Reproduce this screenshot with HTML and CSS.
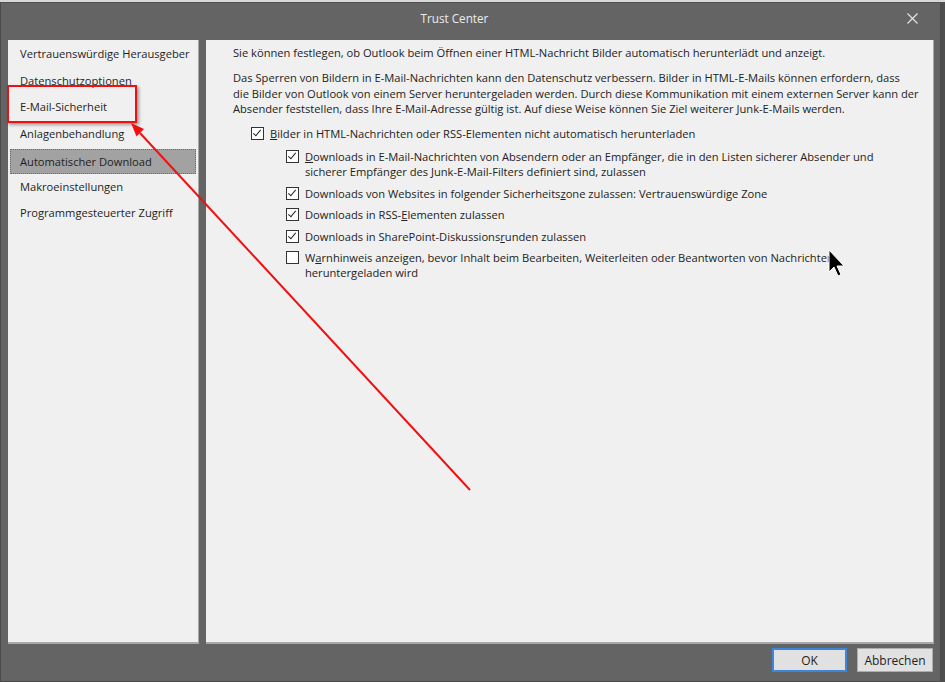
FILE: index.html
```html
<!DOCTYPE html>
<html lang="de">
<head>
    <meta charset="UTF-8">
    <title>Trust Center</title>
    <link rel="stylesheet" href="styles.css">
</head>
<body>
    <div class="top-strip"></div>
    <div class="dialog">
        <div class="title-bar">
            <span class="title">Trust Center</span>
            <svg class="close" width="11" height="11" viewBox="0 0 11 11">
                <path d="M0.5 0.5 L10.5 10.5 M10.5 0.5 L0.5 10.5" stroke="#e4e4e4" stroke-width="1.2" fill="none"/>
            </svg>
        </div>

        <div class="content">
            <ul class="nav">
                <li>Vertrauenswürdige Herausgeber</li>
                <li>Datenschutzoptionen</li>
                <li>E-Mail-Sicherheit</li>
                <li>Anlagenbehandlung</li>
                <li class="selected">Automatischer Download</li>
                <li>Makroeinstellungen</li>
                <li>Programmgesteuerter Zugriff</li>
            </ul>

            <div class="panel">
                <p class="intro">Sie können festlegen, ob Outlook beim Öffnen einer HTML-Nachricht Bilder automatisch herunterlädt und anzeigt.</p>
                <p class="info">Das Sperren von Bildern in E-Mail-Nachrichten kann den Datenschutz verbessern. Bilder in HTML-E-Mails können erfordern, dass<br>die Bilder von Outlook von einem Server heruntergeladen werden. Durch diese Kommunikation mit einem externen Server kann der<br>Absender feststellen, dass Ihre E-Mail-Adresse gültig ist. Auf diese Weise können Sie Ziel weiterer Junk-E-Mails werden.</p>

                <div class="option main">
                    <span class="box checked"></span>
                    <span><u>B</u>ilder in HTML-Nachrichten oder RSS-Elementen nicht automatisch herunterladen</span>
                </div>
                <div class="option sub first">
                    <span class="box checked"></span>
                    <span><u>D</u>ownloads in E-Mail-Nachrichten von Absendern oder an Empfänger, die in den Listen sicherer Absender und<br>sicherer Empfänger des Junk-E-Mail-Filters definiert sind, zulassen</span>
                </div>
                <div class="option sub">
                    <span class="box checked"></span>
                    <span>Downloads von Websites in folgender Sicherheits<u>z</u>one zulassen: Vertrauenswürdige Zone</span>
                </div>
                <div class="option sub">
                    <span class="box checked"></span>
                    <span>Downloads in RSS-<u>E</u>lementen zulassen</span>
                </div>
                <div class="option sub">
                    <span class="box checked"></span>
                    <span>Downloads in SharePoint-Diskussions<u>r</u>unden zulassen</span>
                </div>
                <div class="option sub">
                    <span class="box"></span>
                    <span>W<u>a</u>rnhinweis anzeigen, bevor Inhalt beim Bearbeiten, Weiterleiten oder Beantworten von Nachrichten<br>heruntergeladen wird</span>
                </div>
            </div>
        </div>

        <div class="footer">
            <button class="btn default">OK</button>
            <button class="btn">Abbrechen</button>
        </div>
    </div>

    <!-- annotation drawn over the screenshot -->
    <div class="highlight"></div>
    <svg class="annotation" width="945" height="682" viewBox="0 0 945 682">
        <line x1="470" y1="490" x2="140" y2="133" stroke="#f01010" stroke-width="2"/>
        <polygon points="131,123 144,129 136.5,136.5" fill="#f01010"/>
    </svg>
    <svg class="cursor" width="18" height="30" viewBox="0 0 18 30">
        <path d="M1 1 L1 23 L6 18 L10 27 L13 25.6 L9 17 L16 17 Z" fill="#000" stroke="#fff" stroke-width="1"/>
    </svg>
</body>
</html>
```

FILE: styles.css
```css
body {
    margin: 0;
    background-color: #4e4e4e;
    font-family: "Open Sans", "Noto Sans", sans-serif;
    font-size: 11.15px;
    color: #1e1e1e;
    width: 945px;
    height: 682px;
    overflow: hidden;
    position: relative;
}
.top-strip {
    height: 2px;
    background-color: #d8d8d8;
}
.dialog {
    width: 939px;
    height: 678px;
    background-color: #646464;
    border: 1px solid #4a4a4a;
    border-top-color: #505050;
    display: flex;
    flex-direction: column;
}
.title-bar {
    height: 37px;
    display: flex;
    align-items: center;
    position: relative;
}
.title {
    flex: 1;
    text-align: center;
    color: #ececec;
    font-size: 11.7px;
    padding-right: 32px;
    margin-top: -7px;
}
.close {
    position: absolute;
    right: 22px;
    top: 10px;
}
.content {
    display: flex;
    gap: 7px;
    padding-left: 7px;
    height: 604px;
}
.nav {
    list-style: none;
    margin: 0;
    padding: 1px 2px 0 2px;
    background-color: #f0f0f0;
    border-right: 1px solid #a8a8a8;
    border-bottom: 2px solid #a8a8a8;
    box-sizing: border-box;
    width: 191px;
}
.nav li {
    height: 26.67px;
    line-height: 26px;
    padding-left: 10px;
    box-sizing: border-box;
    white-space: nowrap;
}
.nav li.selected {
    background-color: #a2a2a2;
    border: 1px dotted #6a6a6a;
    line-height: 23px;
    padding-left: 9px;
    margin-top: 1px;
    height: 25px;
}
.panel {
    width: 728px;
    background-color: #f0f0f0;
    border-right: 1px solid #a8a8a8;
    border-bottom: 2px solid #a8a8a8;
    box-sizing: border-box;
    padding: 5px 0 0 27px;
    line-height: 15px;
    color: #222;
}
.panel p {
    margin: 0;
    white-space: nowrap;
}
.panel .info {
    margin-top: 10px;
    line-height: 15.5px;
}
.option {
    display: flex;
    align-items: flex-start;
    gap: 6px;
    white-space: nowrap;
    margin-top: 6.5px;
}
.option.main {
    margin-left: 18px;
    margin-top: 9.5px;
}
.option.sub {
    margin-left: 53px;
}
.option.first {
    margin-top: 8px;
}
.box {
    flex: none;
    width: 11px;
    height: 11px;
    margin-top: 1px;
    border: 1px solid #333;
    background-color: #fff;
    position: relative;
}
.box.checked::after {
    content: "";
    position: absolute;
    left: 3px;
    top: 0px;
    width: 3px;
    height: 7px;
    border-right: 1.5px solid #222;
    border-bottom: 1.5px solid #222;
    transform: rotate(40deg);
}
.footer {
    flex: 1;
    display: flex;
    justify-content: flex-end;
    align-items: flex-start;
    gap: 10px;
    padding: 4px 7px 0 0;
}
.btn {
    width: 76px;
    height: 24px;
    background-color: #e1e1e1;
    border: 1px solid #adadad;
    font-family: inherit;
    font-size: 12px;
    color: #1e1e1e;
    padding: 0;
}
.btn.default {
    border: 2px solid #3d86d8;
    width: 75px;
}
.highlight {
    position: absolute;
    left: 7px;
    top: 85px;
    width: 126px;
    height: 34px;
    border: 2px solid #f01010;
    box-shadow: 2px 2px 3px rgba(0, 0, 0, 0.35);
}
.annotation {
    position: absolute;
    left: 0;
    top: 0;
    pointer-events: none;
}
.cursor {
    position: absolute;
    left: 828px;
    top: 249px;
}
```
